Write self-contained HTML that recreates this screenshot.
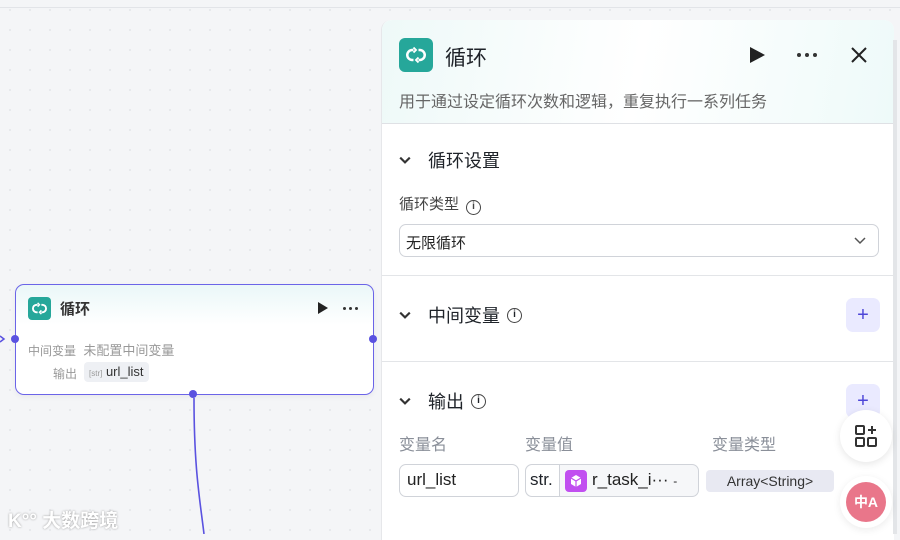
<!DOCTYPE html>
<html><head><meta charset="utf-8"><style>
*{box-sizing:border-box;margin:0;padding:0}
body{width:900px;height:534px;overflow:hidden;position:relative;background:#f4f5f7;font-family:"Liberation Sans","Noto Sans CJK SC",sans-serif;color:#1f2329}
.canvas{position:absolute;inset:0;background-image:radial-gradient(#e3e5e9 1px,transparent 1px);background-size:20px 20px}
.topline{position:absolute;left:0;top:7px;width:900px;height:1px;background:#e2e4e8}
.node{position:absolute;left:15px;top:284px;width:359px;height:111px;border:1.5px solid #6b64e8;border-radius:9px;background:linear-gradient(#eaf7f8,#fff 40px);box-shadow:0 2px 6px rgba(0,0,0,.05)}
.ic{background:#26a79a;border-radius:4px;display:flex;align-items:center;justify-content:center}
.dot{position:absolute;width:8px;height:8px;border-radius:50%;background:#5a52e0}
.panel{position:absolute;left:381px;top:20px;width:513px;height:520px;background:#fff;border-radius:10px 10px 0 0;border-left:1px solid #e6e7ea}
.hdr{height:104px;border-radius:10px 10px 0 0;background:linear-gradient(100deg,#eef9f8,#fff 50%,#eefaf9);border-bottom:1px solid #dfe1e5;position:relative}
.sec{position:absolute;left:17px;font-size:18px;color:#1f2329;display:flex;align-items:center}
.chev{width:12px;height:12px;margin-right:17px}
.plus{position:absolute;left:464px;width:34px;height:34px;border-radius:7px;background:#eaeaff;color:#4d46d8;font-size:20px;display:flex;align-items:center;justify-content:center}
.hr{position:absolute;left:0;width:513px;height:1px;background:#e3e5e8}
.info{display:inline-block;width:15px;height:15px;border:1.5px solid #444;border-radius:50%;font-size:10px;text-align:center;line-height:12px;margin-left:7px;font-weight:bold}
.lbl{position:absolute;font-size:16px;color:#8a8f99}
.box{position:absolute;border:1px solid #d0d3d9;border-radius:7px;background:#fff}
.dots{position:absolute;display:flex;gap:4px}
.dots i{display:block;border-radius:50%;background:#333}
</style></head><body>
<div class="canvas"></div><div class="topline"></div>

<div class="node">
 <div class="ic" style="position:absolute;left:12px;top:12px;width:23px;height:23px"><svg width="15" height="15" viewBox="0 0 16 16" fill="none" stroke="#fff" stroke-width="2"><path d="M6 4H5a4 4 0 0 0 0 8h1M10 12h1a4 4 0 0 0 0-8h-1"/><path d="M6 2l2 2-2 2M10 10l-2 2 2 2" stroke-width="1.5"/></svg></div>
 <div style="position:absolute;left:44px;top:13px;font-size:15px;font-weight:bold;color:#333">循环</div>
 <div style="position:absolute;left:302px;top:17px;width:0;height:0;border-left:10px solid #222;border-top:6px solid transparent;border-bottom:6px solid transparent"></div>
 <div class="dots" style="left:327px;top:22px;gap:3px"><i style="width:3px;height:3px"></i><i style="width:3px;height:3px"></i><i style="width:3px;height:3px"></i></div>
 <div style="position:absolute;left:12px;top:55px;font-size:12px;color:#999">中间变量 <span style="font-size:13px;margin-left:4px">未配置中间变量</span></div>
 <div style="position:absolute;left:37px;top:80px;font-size:12px;color:#999">输出</div>
 <div style="position:absolute;left:68px;top:77px;height:20px;padding:0 5px;background:#eef0f4;border-radius:4px;font-size:13px;color:#333;line-height:20px"><span style="font-size:8px;color:#999">[str]</span> url_list</div>
</div>
<div class="dot" style="left:11px;top:335px"></div>
<div class="dot" style="left:369px;top:335px"></div>
<div class="dot" style="left:189px;top:390px"></div>
<svg style="position:absolute;left:0;top:0" width="900" height="534"><path d="M194 398 C194 470 200 500 204 534" stroke="#5a52e0" stroke-width="1.6" fill="none"/><path d="M0 336l4 3-4 3" stroke="#5a52e0" stroke-width="1.5" fill="none"/></svg>
<div style="position:absolute;left:8px;top:506px;font-size:19px;color:#fff;font-weight:bold;text-shadow:0 0 2px #999">K°° 大数跨境</div>

<div class="panel">
 <div class="hdr">
  <div class="ic" style="position:absolute;left:17px;top:18px;width:34px;height:34px;border-radius:6px"><svg width="20" height="20" viewBox="0 0 16 16" fill="none" stroke="#fff" stroke-width="2"><path d="M6 4H5a4 4 0 0 0 0 8h1M10 12h1a4 4 0 0 0 0-8h-1"/><path d="M6 2l2 2-2 2M10 10l-2 2 2 2" stroke-width="1.5"/></svg></div>
  <div style="position:absolute;left:63px;top:22px;font-size:21px;color:#1f2329">循环</div>
  <div style="position:absolute;left:368px;top:27px;width:0;height:0;border-left:15px solid #222;border-top:8px solid transparent;border-bottom:8px solid transparent"></div>
  <div class="dots" style="left:415px;top:33px"><i style="width:4px;height:4px"></i><i style="width:4px;height:4px"></i><i style="width:4px;height:4px"></i></div>
  <svg style="position:absolute;left:469px;top:27px" width="16" height="16"><path d="M1 1L15 15M15 1L1 15" stroke="#222" stroke-width="2"/></svg>
  <div style="position:absolute;left:17px;top:68px;font-size:16px;color:#666">用于通过设定循环次数和逻辑，重复执行一系列任务</div>
 </div>
 <div class="sec" style="top:127px"><svg class="chev" viewBox="0 0 10 10"><path d="M1 3l4 4 4-4" stroke="#333" stroke-width="1.8" fill="none"/></svg>循环设置</div>
 <div style="position:absolute;left:17px;top:173px;font-size:15px;color:#444">循环类型<span class="info">i</span></div>
 <div class="box" style="left:17px;top:204px;width:480px;height:33px;font-size:15px;padding:7px 6px;color:#222">无限循环<svg style="position:absolute;right:12px;top:12px" width="12" height="8"><path d="M1 1l5 5 5-5" stroke="#555" stroke-width="1.5" fill="none"/></svg></div>
 <div class="hr" style="top:255px"></div>
 <div class="sec" style="top:282px"><svg class="chev" viewBox="0 0 10 10"><path d="M1 3l4 4 4-4" stroke="#333" stroke-width="1.8" fill="none"/></svg>中间变量<span class="info">i</span></div>
 <div class="plus" style="top:278px">+</div>
 <div class="hr" style="top:341px"></div>
 <div class="sec" style="top:368px"><svg class="chev" viewBox="0 0 10 10"><path d="M1 3l4 4 4-4" stroke="#333" stroke-width="1.8" fill="none"/></svg>输出<span class="info">i</span></div>
 <div class="plus" style="top:364px">+</div>
 <div class="lbl" style="left:17px;top:411px">变量名</div>
 <div class="lbl" style="left:143px;top:411px">变量值</div>
 <div class="lbl" style="left:330px;top:411px">变量类型</div>
 <div class="box" style="left:17px;top:444px;width:120px;height:33px;font-size:17px;padding:5px 7px;color:#222">url_list</div>
 <div class="box" style="left:143px;top:444px;width:174px;height:33px;background:#f6f7f9">
  <div style="position:absolute;left:0;top:0;width:34px;height:31px;border-right:1px solid #d0d3d9;font-size:17px;padding:5px 4px;background:#fff;border-radius:7px 0 0 7px">str.</div>
  <div style="position:absolute;left:39px;top:5px;width:22px;height:22px;border-radius:4px;background:#c14ff0;display:flex;align-items:center;justify-content:center"><svg width="14" height="14" viewBox="0 0 14 14"><path d="M7 1l5 3v6l-5 3-5-3V4z" fill="#fff"/><path d="M2 4l5 3 5-3M7 7v6" stroke="#c14ff0" stroke-width="1.2" fill="none"/></svg></div>
  <div style="position:absolute;left:66px;top:5px;font-size:17px;color:#222">r_task_i··· <span style="font-size:12px">-</span></div>
 </div>
 <div style="position:absolute;left:324px;top:450px;width:128px;height:22px;background:#e8e9f2;border-radius:4px;font-size:14px;color:#333;text-align:center;line-height:22px">Array&lt;String&gt;</div>
</div>
<div style="position:absolute;left:893px;top:40px;width:4px;height:494px;background:#e3e5e8"></div>
<div style="position:absolute;left:840px;top:410px;width:52px;height:52px;border-radius:50%;background:#fff;box-shadow:0 2px 8px rgba(0,0,0,.1);display:flex;align-items:center;justify-content:center"><svg width="24" height="24" viewBox="0 0 24 24" fill="none" stroke="#333" stroke-width="2"><rect x="2" y="2" width="8" height="8" rx="1"/><rect x="2" y="14" width="8" height="8" rx="1"/><rect x="14" y="14" width="8" height="8" rx="1"/><path d="M18 2v8M14 6h8"/></svg></div>
<div style="position:absolute;left:840px;top:476px;width:52px;height:52px;border-radius:50%;background:#fff;box-shadow:0 2px 8px rgba(0,0,0,.08)"><div style="position:absolute;left:6px;top:6px;width:40px;height:40px;border-radius:50%;background:#e9768a;color:#fff;font-size:14px;font-weight:bold;display:flex;align-items:center;justify-content:center">中A</div></div>
</body></html>
